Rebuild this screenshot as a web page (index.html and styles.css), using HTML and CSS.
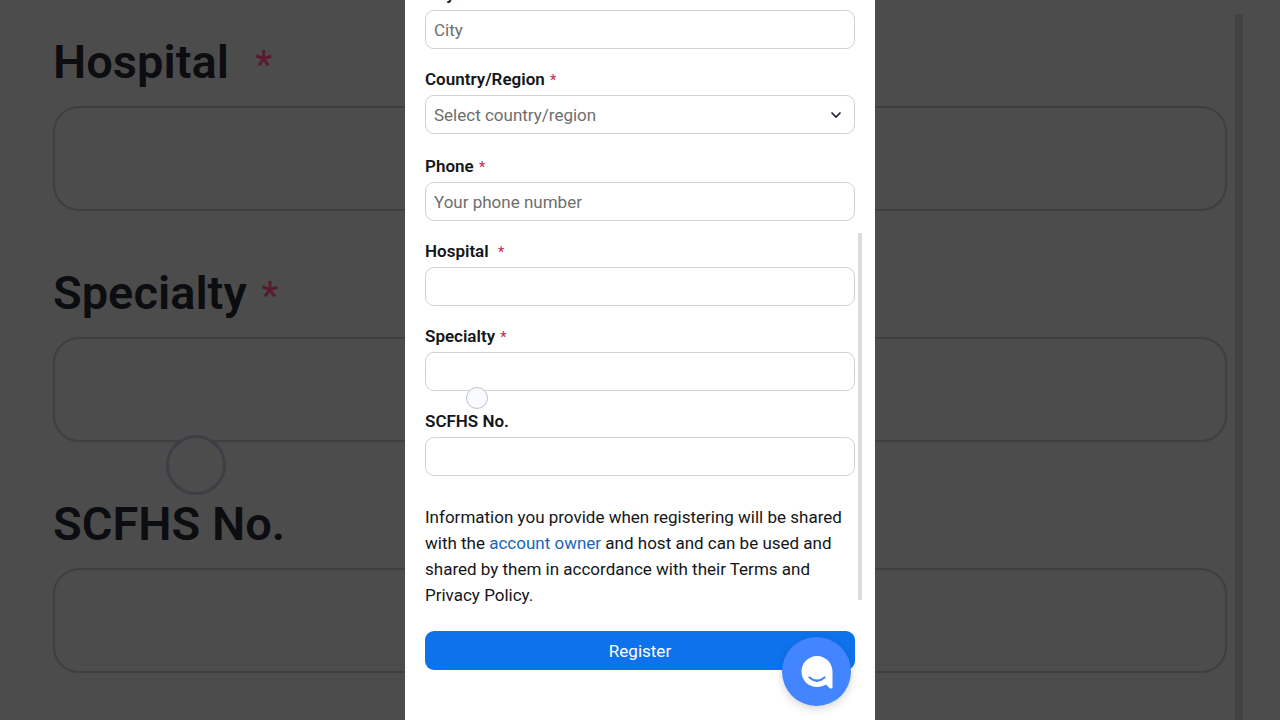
FILE: index.html
```html
<!DOCTYPE html>
<html lang="en">

<head>
    <meta charset="UTF-8">
    <meta name="viewport" content="width=device-width, initial-scale=1.0">
    <title>Registration</title>
    <link rel="stylesheet" href="styles.css">
</head>

<body>
    <div class="page">
        <!-- Enlarged, dimmed copy of the form -->
        <div class="backdrop">
            <div class="field">
                <label for="bgHospital">Hospital&nbsp; <span class="star">*</span></label>
                <input type="text" id="bgHospital" tabindex="-1">
            </div>
            <div class="field">
                <label for="bgSpecialty">Specialty <span class="star">*</span></label>
                <input type="text" id="bgSpecialty" tabindex="-1">
            </div>
            <div class="field">
                <label for="bgScfhs">SCFHS No.</label>
                <input type="text" id="bgScfhs" tabindex="-1">
            </div>
            <div class="touch"></div>
            <div class="thumb"></div>
        </div>

        <main class="panel">
            <form class="form">
                <div class="field">
                    <label for="city">City <span class="star">*</span></label>
                    <input type="text" id="city" placeholder="City">
                </div>
                <div class="field field-select">
                    <label for="country">Country/Region <span class="star">*</span></label>
                    <div class="select-wrap">
                        <select id="country">
                            <option>Select country/region</option>
                        </select>
                        <svg class="chevron" width="12" height="8" viewBox="0 0 12 8">
                            <path d="M1.5 1.5 L6 6 L10.5 1.5" fill="none" stroke="#222230" stroke-width="1.7" />
                        </svg>
                    </div>
                </div>
                <div class="field">
                    <label for="phone">Phone <span class="star">*</span></label>
                    <input type="tel" id="phone" placeholder="Your phone number">
                </div>
                <div class="field">
                    <label for="hospital">Hospital&nbsp; <span class="star">*</span></label>
                    <input type="text" id="hospital">
                </div>
                <div class="field">
                    <label for="specialty">Specialty <span class="star">*</span></label>
                    <input type="text" id="specialty">
                </div>
                <div class="field">
                    <label for="scfhs">SCFHS No.</label>
                    <input type="text" id="scfhs">
                </div>

                <p class="notice">Information you provide when registering will be shared with the <a href="#">account owner</a> and host and can be used and shared by them in accordance with their Terms and Privacy Policy.</p>

                <button type="submit" class="register">Register</button>
            </form>

            <div class="touch"></div>
            <div class="thumb"></div>

            <button type="button" class="chat" aria-label="Chat">
                <svg width="32" height="34" viewBox="0 0 32 34">
                    <path d="M16 1 C7.5 1 0.5 8 0.5 16.5 C0.5 25.5 7.5 32 16 32 C19.5 32 22.5 31 25 29.500 L28.500 33 C30 34 31.5 33.5 31.5 32 L31.5 16.5 C31.5 8 24.5 1 16 1 Z" fill="#fff" />
                    <path d="M8.5 22.500 Q16 29 23.5 22.500" fill="none" stroke="#4285ff" stroke-width="2.200" stroke-linecap="round" />
                </svg>
            </button>
        </main>
    </div>
</body>

</html>
```
FILE: styles.css
```css
* {
    box-sizing: border-box;
}

body {
    margin: 0;
    font-family: Roboto, "Liberation Sans", sans-serif;
    font-size: 17px;
    color: #131619;
    background-color: #4c4c4c;
}

.page {
    display: grid;
    grid-template-columns: minmax(0, 1fr);
    grid-template-rows: 100vh;
    overflow: hidden;
}

.backdrop,
.panel {
    grid-area: 1 / 1;
    position: relative;
    overflow: hidden;
}

.field {
    display: flex;
    flex-direction: column;
    gap: 4px;
    margin-bottom: 18px;
}

.field-select {
    margin-bottom: 20px;
}

label {
    font-weight: 600;
    line-height: 24px;
}

.star {
    margin-left: 1px;
    font-size: 14px;
    font-weight: 500;
    line-height: 1;
    color: #c4325c;
}

input,
select {
    width: 100%;
    height: 39px;
    padding: 0 8px;
    border: 1px solid #d2d2d4;
    border-radius: 9px;
    background-color: #fff;
    color: #6e6e6e;
    font-family: inherit;
    font-size: 17px;
}

input::placeholder {
    color: #6e6e6e;
    opacity: 1;
}

select {
    display: block;
    appearance: none;
}

.select-wrap {
    position: relative;
}

.chevron {
    position: absolute;
    right: 13px;
    top: 16px;
    pointer-events: none;
}

/* centre panel */
.panel {
    width: 100%;
    max-width: 470px;
    justify-self: center;
    padding: 0 20px;
    background-color: #fff;
}

/* form is scrolled down, so the first label is cut at the top */
.form {
    margin-top: -18px;
}

.notice {
    margin: 28px 0 23px;
    line-height: 26px;
}

.notice a {
    color: #1a66b8;
    text-decoration: none;
}

.register {
    display: block;
    width: 100%;
    height: 39px;
    border: none;
    border-radius: 9px;
    background-color: #0e72ed;
    color: #fff;
    font-family: inherit;
    font-size: 17px;
    cursor: pointer;
}

.chat {
    position: absolute;
    right: 24px;
    bottom: 14px;
    display: flex;
    align-items: center;
    justify-content: center;
    width: 69px;
    height: 69px;
    padding: 0;
    border: none;
    border-radius: 50%;
    background-color: #4285ff;
    box-shadow: 0 3px 8px rgba(0, 0, 0, 0.16);
    cursor: pointer;
}

.touch {
    position: absolute;
    left: 61px;
    top: 387px;
    width: 22px;
    height: 22px;
    border: 1px solid #c0c2d0;
    border-radius: 50%;
    background-color: rgba(250, 251, 255, 0.9);
}

.thumb {
    position: absolute;
    right: 13px;
    top: 233px;
    width: 4px;
    height: 367px;
    background-color: #dcdcdc;
}

/* dimmed background */
.backdrop {
    padding: 29px 53px 0;
    font-size: 47px;
    color: #0c0d10;
}

.backdrop .field {
    gap: 11px;
    margin-bottom: 49px;
}

.backdrop label {
    line-height: 66px;
}

.backdrop .star {
    margin-left: 3px;
    font-size: 38px;
    color: #5a1a2e;
}

.backdrop input {
    height: 105px;
    border: 2px solid #3f3f3f;
    border-radius: 26px;
    background-color: #4c4c4c;
}

.backdrop .touch {
    left: 166px;
    top: 435px;
    width: 60px;
    height: 60px;
    border: 3px solid #3e3e46;
    background-color: #4c4c4c;
}

.backdrop .thumb {
    right: 37px;
    top: 14px;
    bottom: 0;
    width: 8px;
    height: auto;
    background-color: #424242;
}
```
